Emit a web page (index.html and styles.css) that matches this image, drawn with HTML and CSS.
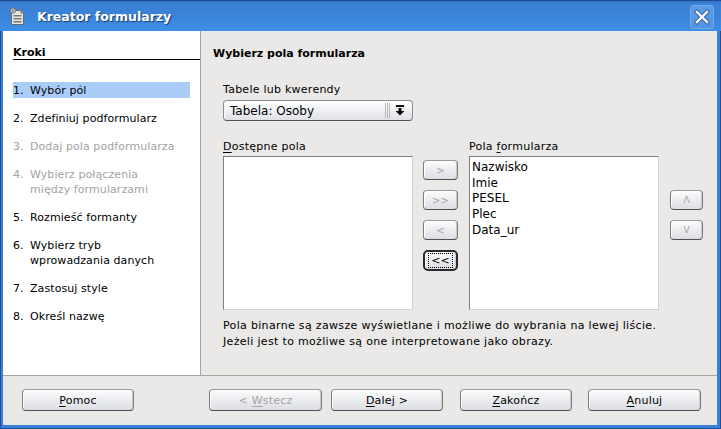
FILE: index.html
```html
<!DOCTYPE html>
<html>
<head>
<meta charset="utf-8">
<link rel="stylesheet" href="styles.css">
</head>
<body>
<div class="win">
  <div class="titlebar">
    <svg class="appicon" width="18" height="19" viewBox="0 0 18 19">
      <path d="M3.5 3.5 H13 L15.5 6 V17.5 H3.5 Z" fill="#e4e4e4" stroke="#6b6b6b"/>
      <path d="M13 3.5 V6 H15.5" fill="#bdbdbd" stroke="#6b6b6b"/>
      <rect x="5.5" y="8" width="8" height="1.5" fill="#7a7a7a"/>
      <rect x="5.5" y="11" width="8" height="1.5" fill="#7a7a7a"/>
      <rect x="5.5" y="14" width="8" height="1.5" fill="#7a7a7a"/>
      <circle cx="5" cy="3.5" r="2.6" fill="#d0d0d0" stroke="#6b6b6b"/>
      <circle cx="5" cy="3.5" r="0.9" fill="#6b6b6b"/>
    </svg>
    <span class="title">Kreator formularzy</span>
    <div class="close">
      <svg width="16" height="16" viewBox="0 0 16 16">
        <path d="M3 3 L13 13 M13 3 L3 13" stroke="#2a5ea8" stroke-width="4.2" stroke-linecap="square"/>
        <path d="M3 3 L13 13 M13 3 L3 13" stroke="#ffffff" stroke-width="2.4" stroke-linecap="square"/>
      </svg>
    </div>
  </div>
  <div class="frame">
    <div class="main">
      <div class="steps">
        <div class="steps-head">Kroki</div>
        <ul class="steplist">
          <li class="step active"><span class="num">1.</span><span class="lbl">Wybór pól</span></li>
          <li class="step"><span class="num">2.</span><span class="lbl">Zdefiniuj podformularz</span></li>
          <li class="step off"><span class="num">3.</span><span class="lbl">Dodaj pola podformularza</span></li>
          <li class="step off"><span class="num">4.</span><span class="lbl">Wybierz połączenia<br>między formularzami</span></li>
          <li class="step"><span class="num">5.</span><span class="lbl">Rozmieść formanty</span></li>
          <li class="step"><span class="num">6.</span><span class="lbl">Wybierz tryb<br>wprowadzania danych</span></li>
          <li class="step"><span class="num">7.</span><span class="lbl">Zastosuj style</span></li>
          <li class="step"><span class="num">8.</span><span class="lbl">Określ nazwę</span></li>
        </ul>
      </div>
      <div class="page">
        <div class="page-head">Wybierz pola formularza</div>
        <div class="inner">
          <div class="label first">Tabele lub kwerendy</div>
          <div class="combo">
            <span class="combo-text">Tabela: Osoby</span>
            <span class="grip"></span>
            <svg class="combo-arrow" width="10" height="11" viewBox="0 0 10 11">
              <rect x="1" y="0" width="8" height="2" fill="#111"/>
              <rect x="3.5" y="3" width="3" height="3" fill="#111"/>
              <path d="M0.5 6 H9.5 L5 10.5 Z" fill="#111"/>
            </svg>
          </div>
          <div class="lists">
            <div class="col">
              <div class="label"><u>D</u>ostępne pola</div>
              <div class="listbox"></div>
            </div>
            <div class="midbtns">
              <div class="sbtn dis">&gt;</div>
              <div class="sbtn dis">&gt;&gt;</div>
              <div class="sbtn dis">&lt;</div>
              <div class="sbtn focus"><span class="dots">&lt;&lt;</span></div>
            </div>
            <div class="col">
              <div class="label">Pola <u>f</u>ormularza</div>
              <div class="listbox">
                <div class="item">Nazwisko</div>
                <div class="item">Imie</div>
                <div class="item">PESEL</div>
                <div class="item">Plec</div>
                <div class="item">Data_ur</div>
              </div>
            </div>
            <div class="sidebtns">
              <div class="sbtn dis small">&#923;</div>
              <div class="sbtn dis small">V</div>
            </div>
          </div>
          <div class="note">Pola binarne są zawsze wyświetlane i możliwe do wybrania na lewej liście.<br>Jeżeli jest to możliwe są one interpretowane jako obrazy.</div>
        </div>
      </div>
    </div>
    <div class="footer">
      <div class="btn b-help"><span><u>P</u>omoc</span></div>
      <div class="btn dis b-back"><span>&lt; <u>W</u>stecz</span></div>
      <div class="btn b-next"><span><u>D</u>alej &gt;</span></div>
      <div class="btn b-finish"><span><u>Z</u>akończ</span></div>
      <div class="btn b-cancel"><span><u>A</u>nuluj</span></div>
    </div>
  </div>
</div>
</body>
</html>
```

FILE: styles.css
```css
* { box-sizing: border-box; }
html, body { margin: 0; padding: 0; }
body {
  width: 721px;
  height: 429px;
  overflow: hidden;
  font-family: "DejaVu Sans", "Liberation Sans", sans-serif;
  font-size: 11px;
  color: #000;
}
.win {
  width: 721px;
  height: 429px;
  display: flex;
  flex-direction: column;
  background: #3a80d8;
  border: 1px solid #1f4f98;
  border-top: none;
}
.titlebar {
  height: 31px;
  flex: none;
  display: flex;
  align-items: center;
  background: linear-gradient(#2e6cc0 0, #3b7fd3 2px, #3a84da 50%, #3f8ee6 100%);
  margin: 0 -1px;
  border-top: 1px solid #1d4b93;
  padding-left: 8px;
  padding-right: 7px;
}
.appicon { flex: none; margin-top: 1px; }
.title {
  margin-left: 11px;
  color: #fff;
  font-weight: bold;
  font-size: 12.5px;
  text-shadow: 1px 1px 1px rgba(10, 30, 70, 0.7);
  flex: 1;
}
.close {
  width: 24px;
  height: 24px;
  margin-top: 1px;
  border: 1px solid #76a8ea;
  border-radius: 3px;
  background: linear-gradient(#5c9be6, #5295e4);
  display: flex;
  align-items: center;
  justify-content: center;
}
.frame {
  flex: 1;
  margin: 0 3px 3px 2px;
  background: #eae9e7;
  display: flex;
  flex-direction: column;
}
.main {
  height: 345px;
  flex: none;
  display: flex;
  border-bottom: 1px solid #a7a6a3;
}
.steps {
  width: 198px;
  flex: none;
  background: #fff;
  border-right: 1px solid #a7a6a3;
  padding-left: 10px;
  padding-top: 15px;
}
.steps-head {
  font-weight: bold;
  line-height: 13px;
  border-bottom: 1px solid #000;
}
.steplist {
  list-style: none;
  margin: 22px 0 0 0;
  padding: 0;
  display: flex;
  flex-direction: column;
  gap: 12px;
}
.step {
  display: flex;
  width: 177px;
  line-height: 15px;
  padding: 0.5px 0;
  letter-spacing: 0.08px;
}
.step.active { background: #a9cdf8; }
.step.off { color: #a3a3a3; }
.num { width: 17px; flex: none; }
.page {
  flex: 1;
  padding: 15px 0 0 12px;
}
.page-head {
  font-weight: bold;
  line-height: 15px;
}
.inner {
  margin-left: 10px;
}
.label { line-height: 15px; margin-top: 18px; letter-spacing: 0.25px; }
.label.first { margin-top: 21px; }
.combo {
  margin-top: 3px;
  width: 190px;
  height: 21px;
  border: 1px solid #8c8c8c;
  border-bottom-color: #555;
  border-radius: 4px;
  background: linear-gradient(#ffffff, #eef0f3 50%, #dfe1e6);
  box-shadow: inset 1px 1px 0 #fff;
  display: flex;
  align-items: center;
  padding-left: 6px;
}
.combo-text { flex: 1; font-size: 12px; }
.grip {
  width: 5px;
  height: 15px;
  border-left: 1px solid #b8b8b8;
  border-right: 1px solid #b8b8b8;
  background: linear-gradient(90deg, transparent 1px, #b8b8b8 1px, #b8b8b8 2px, transparent 2px);
  margin-right: 5px;
}
.combo-arrow { margin-right: 7px; }
.lists {
  display: flex;
  align-items: flex-start;
}
.col { width: 190px; flex: none; }
.listbox {
  margin-top: 2px;
  height: 154px;
  background: #fff;
  border: 1px solid #d4d4d4;
  border-top-color: #7f7f7f;
  border-left-color: #7f7f7f;
  padding: 3px 0 0 2px;
}
.item { line-height: 15.7px; font-size: 12px; }
.midbtns {
  width: 35px;
  flex: none;
  margin: 39px 11px 0 10px;
  display: flex;
  flex-direction: column;
  gap: 10px;
}
.sidebtns {
  width: 33px;
  flex: none;
  margin: 69px 0 0 11px;
  display: flex;
  flex-direction: column;
  gap: 10px;
}
.sbtn, .btn {
  height: 20px;
  border: 1px solid #7c7c7c;
  border-bottom-color: #4f4f4f;
  border-top-color: #9a9a9a;
  border-radius: 4px;
  background: linear-gradient(#fdfdfd, #eceef1 45%, #dcdee3);
  box-shadow: inset 1px 1px 0 #fff, inset -1px 0 0 #c9cbd0;
  display: flex;
  align-items: center;
  justify-content: center;
}
.sbtn { font-size: 10px; }
.sbtn.small { font-size: 9px; }
.dis { color: #a5a5a5; }
.sbtn.focus {
  height: 21px;
  border: 2px solid #2b2b2b;
  border-radius: 5px;
  color: #000;
  font-size: 11px;
}
.dots {
  border: 1px dotted #000;
  padding: 0 2px;
  line-height: 13px;
}
.note {
  margin-top: 8px;
  line-height: 16px;
  letter-spacing: 0.33px;
}
.footer {
  flex: 1;
  display: flex;
  align-items: flex-start;
  padding: 13px 0 0 19px;
}
.btn { height: 22px; width: 112px; letter-spacing: 0.2px; }
.b-back { margin-left: 75px; width: 113px; }
.b-next { margin-left: 9px; }
.b-finish { margin-left: 17px; }
.b-cancel { margin-left: 16px; width: 113px; }
u { text-decoration-thickness: 1px; text-underline-offset: 2px; }
```
